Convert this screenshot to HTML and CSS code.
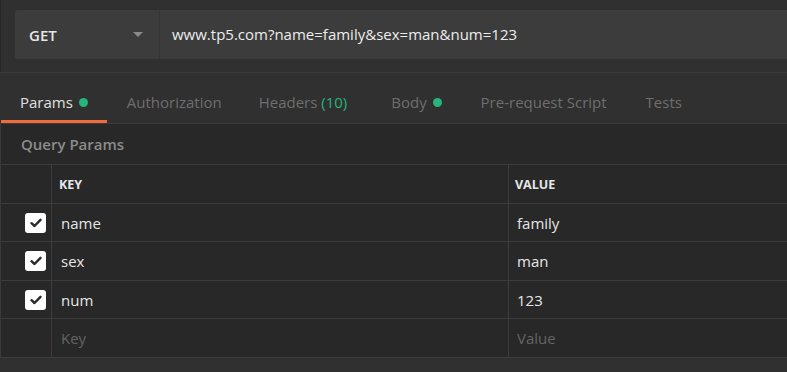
FILE: index.html
```html
<!DOCTYPE html>
<html lang="en">
<head>
  <meta charset="UTF-8">
  <meta name="viewport" content="width=device-width, initial-scale=1.0">
  <title>Request - Params</title>
  <link rel="stylesheet" href="styles.css">
</head>
<body>
  <div class="request-bar">
    <div class="method">
      <span>GET</span>
      <span class="caret"></span>
    </div>
    <div class="url">www.tp5.com?name=family&amp;sex=man&amp;num=123</div>
  </div>

  <div class="tabs">
    <div class="tab active">Params <span class="dot"></span></div>
    <div class="tab">Authorization</div>
    <div class="tab headers">Headers <span class="count">(10)</span></div>
    <div class="tab">Body <span class="dot"></span></div>
    <div class="tab">Pre-request Script</div>
    <div class="tab">Tests</div>
  </div>

  <div class="params">
    <div class="section-title">Query Params</div>
    <div class="table">
      <div class="row head">
        <div class="cell check"></div>
        <div class="cell key">KEY</div>
        <div class="cell value">VALUE</div>
      </div>
      <div class="row">
        <div class="cell check"><span class="box"><svg width="12" height="10" viewBox="0 0 12 10"><path d="M1.5 5.2 L4.5 8 L10.5 1.8" fill="none" stroke="#2b2b2b" stroke-width="2.4" stroke-linecap="round" stroke-linejoin="round"/></svg></span></div>
        <div class="cell key">name</div>
        <div class="cell value">family</div>
      </div>
      <div class="row">
        <div class="cell check"><span class="box"><svg width="12" height="10" viewBox="0 0 12 10"><path d="M1.5 5.2 L4.5 8 L10.5 1.8" fill="none" stroke="#2b2b2b" stroke-width="2.4" stroke-linecap="round" stroke-linejoin="round"/></svg></span></div>
        <div class="cell key">sex</div>
        <div class="cell value">man</div>
      </div>
      <div class="row">
        <div class="cell check"><span class="box"><svg width="12" height="10" viewBox="0 0 12 10"><path d="M1.5 5.2 L4.5 8 L10.5 1.8" fill="none" stroke="#2b2b2b" stroke-width="2.4" stroke-linecap="round" stroke-linejoin="round"/></svg></span></div>
        <div class="cell key">num</div>
        <div class="cell value">123</div>
      </div>
      <div class="row empty">
        <div class="cell check"></div>
        <div class="cell key placeholder">Key</div>
        <div class="cell value placeholder">Value</div>
      </div>
    </div>
  </div>
</body>
</html>
```

FILE: styles.css
```css
body {
  margin: 0;
  background-color: #303030;
  font-family: "Open Sans", "Liberation Sans", sans-serif;
  font-size: 15px;
  color: #e6e6e6;
  overflow: hidden;
  height: 372px;
}
.request-bar {
  display: flex;
  height: 49px;
  padding: 10px 0 13px 14px;
  border-left: 1px solid #262626;
}
.method {
  width: 145px;
  display: flex;
  align-items: center;
  justify-content: space-between;
  padding: 0 16px 0 14px;
  box-sizing: border-box;
  background-color: #3c3c3c;
  border-radius: 3px 0 0 3px;
  border-right: 1px solid #353535;
  font-weight: 600;
  color: #e6e6e6;
}
.caret {
  width: 0;
  height: 0;
  border-left: 5px solid transparent;
  border-right: 5px solid transparent;
  border-top: 5px solid #8a8a8a;
}
.url {
  flex: 1;
  display: flex;
  align-items: center;
  padding-left: 12px;
  padding-bottom: 1px;
  background-color: #3c3c3c;
  color: #ececec;
}
.tabs {
  display: flex;
  height: 50px;
  border-top: 1px solid #3b3b3b;
  border-bottom: 1px solid #3b3b3b;
}
.tab {
  padding: 18px 19px 0;
  line-height: 22px;
  color: #6e6e6e;
  box-sizing: border-box;
  border-bottom: 3px solid transparent;
  margin-right: 1px;
}
.tab:first-child {
  margin-left: 1px;
}
.tab.headers {
  padding-left: 17px;
  padding-right: 24px;
}
.tab.active {
  color: #e0e0e0;
  border-bottom-color: #f26b3a;
}
.dot {
  display: inline-block;
  width: 9px;
  height: 9px;
  border-radius: 50%;
  background-color: #26b47f;
  margin-left: 2px;
  vertical-align: 1px;
}
.count {
  color: #26b47f;
}
.params {
  background-color: #282828;
  border-left: 1px solid #3a3a3a;
}
.section-title {
  height: 40px;
  line-height: 40px;
  padding-left: 20px;
  color: #8c8c8c;
  font-weight: 600;
}
.table {
  border-top: 1px solid #3c3c3c;
  border-bottom: 1px solid #3c3c3c;
}
.row {
  display: flex;
  height: 38px;
  border-top: 1px solid #3c3c3c;
}
.row:first-child {
  border-top: none;
}
.row:nth-child(even) {
  height: 37px;
}
.cell {
  display: flex;
  align-items: center;
  box-sizing: border-box;
}
.check {
  width: 51px;
  border-right: 1px solid #3c3c3c;
  padding-left: 24px;
}
.key {
  width: 457px;
  padding-left: 9px;
  border-right: 1px solid #3c3c3c;
}
.value {
  flex: 1;
  padding-left: 8px;
}
.head .cell {
  font-size: 12.5px;
  font-weight: 700;
  color: #e6e6e6;
}
.head .key {
  padding-left: 7px;
}
.head .value {
  padding-left: 6px;
}
.box {
  width: 21px;
  height: 20px;
  border-radius: 3px;
  background-color: #ffffff;
  display: flex;
  align-items: center;
  justify-content: center;
}
.placeholder {
  color: #636363;
}
```
